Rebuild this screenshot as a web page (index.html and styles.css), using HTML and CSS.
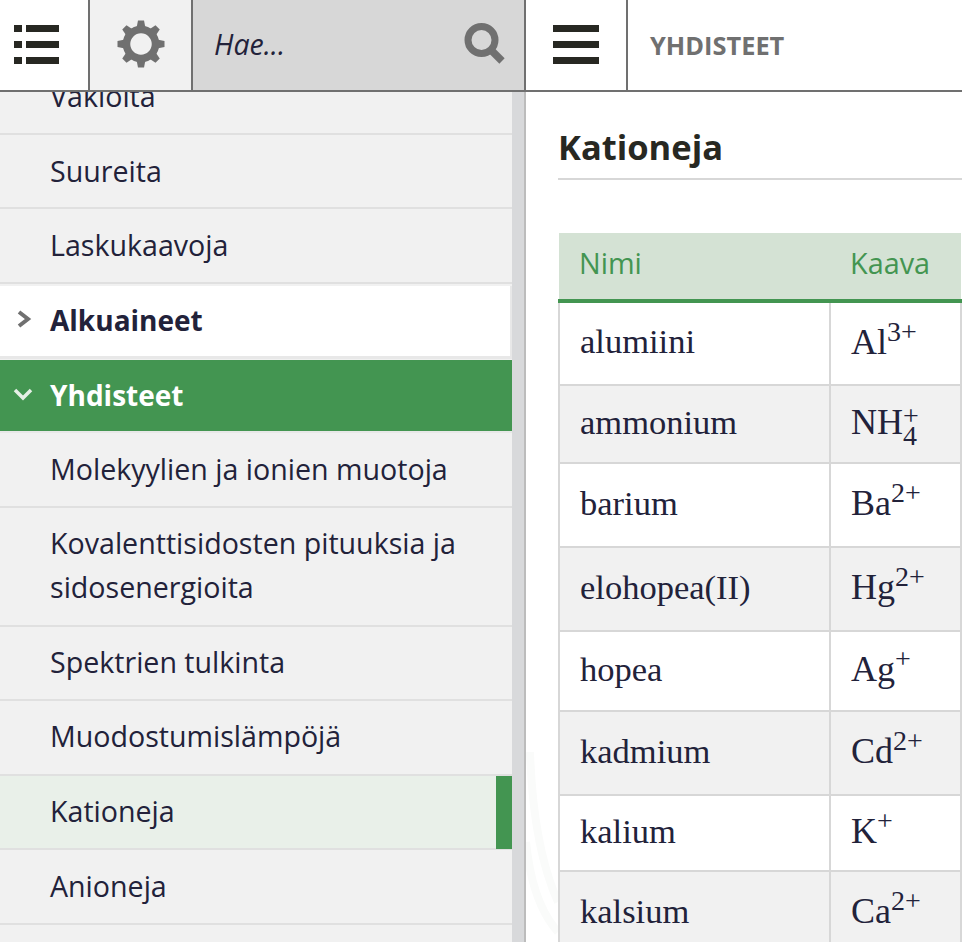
FILE: index.html
```html
<!DOCTYPE html>
<html lang="fi">
<head>
<meta charset="utf-8">
<title>Kationeja</title>
<link rel="stylesheet" href="styles.css">
</head>
<body>
<div class="app">
  <header class="topbar">
    <div class="tool tool-list">
      <svg class="icon-bars" width="46" height="42" viewBox="0 0 46 42"><path d="M0 1h8v7H0zM12 1h33v7H12zM0 17h8v7H0zM12 17h33v7H12zM0 33h8v7H0zM12 33h33v7H12z"/></svg>
    </div>
    <div class="tool tool-gear">
      <svg width="48" height="48" viewBox="0 0 48 48" fill="#707070">
        <g>
          <path d="M19.500 8l1.500-7.500h6l1.500 7.500z"/>
          <path d="M19.500 8l1.500-7.500h6l1.500 7.500z" transform="rotate(45 24 24)"/>
          <path d="M19.500 8l1.500-7.500h6l1.500 7.500z" transform="rotate(90 24 24)"/>
          <path d="M19.500 8l1.500-7.500h6l1.500 7.500z" transform="rotate(135 24 24)"/>
          <path d="M19.500 8l1.500-7.500h6l1.500 7.500z" transform="rotate(180 24 24)"/>
          <path d="M19.500 8l1.500-7.500h6l1.500 7.500z" transform="rotate(225 24 24)"/>
          <path d="M19.500 8l1.500-7.500h6l1.500 7.500z" transform="rotate(270 24 24)"/>
          <path d="M19.500 8l1.500-7.500h6l1.500 7.500z" transform="rotate(315 24 24)"/>
        </g>
        <circle cx="24" cy="24" r="14.500" fill="none" stroke="#707070" stroke-width="7.500"/>
      </svg>
    </div>
    <div class="tool tool-search">
      <span class="search-text">Hae...</span>
      <svg width="42" height="44" viewBox="0 0 42 44" fill="none" stroke="#707070"><circle cx="17.500" cy="18" r="13.500" stroke-width="7"/><path d="M27 28l11 11" stroke-width="7.500"/></svg>
    </div>
    <div class="tool tool-menu">
      <svg class="icon-bars" width="46" height="42" viewBox="0 0 46 42"><path d="M0 1h46v7H0zM0 17h46v7H0zM0 33h46v7H0z"/></svg>
    </div>
    <div class="page-title">YHDISTEET</div>
  </header>
  <div class="content">
    <nav class="sidebar">
      <div class="nav-scroll">
        <ul class="nav-list">
          <li class="nav-item">Vakioita</li>
          <li class="nav-item">Suureita</li>
          <li class="nav-item">Laskukaavoja</li>
          <li class="nav-item nav-section nav-closed">
            <svg class="chev" width="16" height="18" viewBox="0 0 16 18" fill="none" stroke="#707070" stroke-width="4"><path d="M3 2l9 7-9 7"/></svg>
            Alkuaineet
          </li>
          <li class="nav-item nav-section nav-open">
            <svg class="chev" width="20" height="16" viewBox="0 0 20 16" fill="none" stroke="#e6efe6" stroke-width="3.500"><path d="M2 3l8 8 8-8"/></svg>
            Yhdisteet
          </li>
          <li class="nav-item">Molekyylien ja ionien muotoja</li>
          <li class="nav-item">Kovalenttisidosten pituuksia ja<br>sidosenergioita</li>
          <li class="nav-item">Spektrien tulkinta</li>
          <li class="nav-item">Muodostumislämpöjä</li>
          <li class="nav-item nav-current">Kationeja</li>
          <li class="nav-item">Anioneja</li>
          <li class="nav-item">Happoja</li>
        </ul>
      </div>
      <div class="scrollbar"></div>
    </nav>
    <main class="main">
      <svg class="watermark" width="32" height="190" viewBox="0 0 32 190" fill="none" stroke="#fafbfa" stroke-width="8"><path d="M4 0c2 60 10 110 28 150M0 90c4 40 14 70 32 90"/></svg>
      <h1 class="heading">Kationeja</h1>
      <table class="ions">
        <thead>
          <tr><th class="col-name">Nimi</th><th class="col-formula">Kaava</th></tr>
        </thead>
        <tbody>
          <tr class="h84"><td>alumiini</td><td class="formula">Al<sup>3+</sup></td></tr>
          <tr class="h78"><td>ammonium</td><td class="formula">NH<span class="stack"><span>+</span><span>4</span></span></td></tr>
          <tr class="h84"><td>barium</td><td class="formula">Ba<sup>2+</sup></td></tr>
          <tr class="h84"><td>elohopea(II)</td><td class="formula">Hg<sup>2+</sup></td></tr>
          <tr class="h80"><td>hopea</td><td class="formula">Ag<sup>+</sup></td></tr>
          <tr class="h84"><td>kadmium</td><td class="formula">Cd<sup>2+</sup></td></tr>
          <tr class="h76"><td>kalium</td><td class="formula">K<sup>+</sup></td></tr>
          <tr class="h84"><td>kalsium</td><td class="formula">Ca<sup>2+</sup></td></tr>
        </tbody>
      </table>
    </main>
  </div>
</div>
</body>
</html>
```
FILE: styles.css
```css
* { box-sizing: border-box; }
html, body { margin: 0; height: 100%; overflow: hidden; background: #fff; }
body { font-family: "Open Sans", "Noto Sans", sans-serif; color: #22223a; }
.app { display: flex; flex-direction: column; height: 942px; overflow: hidden; }

.topbar { display: flex; height: 92px; flex: none; border-bottom: 2px solid #707070; background: #fff; }
.tool { display: flex; align-items: center; justify-content: center; height: 90px; border-right: 2px solid #707070; flex: none; }
.icon-bars { fill: #272822; display: block; }
.tool-list { width: 90px; background: #fff; padding-right: 15px; }
.tool-gear { width: 103px; background: #f1f1f1; padding: 0 0 3px 1px; }
.tool-search { width: 333px; background: #d7d7d7; justify-content: space-between; padding: 0 18px 2px 21px; }
.tool-menu { width: 102px; background: #fff; }
.search-text { font-style: italic; font-size: 28.500px; color: #22223a; }
.page-title { padding: 0 0 0 22px; display: flex; align-items: center; height: 90px; font-size: 25.400px; font-weight: 700; color: #707070; }

.content { flex: 1; display: flex; min-height: 0; }
.sidebar { width: 526px; flex: none; display: flex; border-right: 2px solid #bcbcbc; overflow: hidden; }
.nav-scroll { width: 512px; flex: none; overflow: hidden; background: #f1f1f1; }
.scrollbar { width: 12px; background: #d8d9db; }
.nav-list { list-style: none; margin: -32px 0 0; padding: 0; }
.nav-item { position: relative; padding: 14.300px 10px 14.300px 50px; line-height: 44px; font-size: 28.600px; border-bottom: 2px solid #e0e0e0; }
.nav-section { font-weight: 700; font-size: 28px; }
.nav-closed { background: #fff; margin-top: 2px; border-right: 2px solid #e8e8e8; border-bottom: 3px solid #e8e8e8; padding-top: 12.300px; padding-bottom: 14.300px; }
.nav-open { background: #439551; color: #fff; margin-top: 1px; padding-top: 13px; padding-bottom: 14px; border-bottom-color: #e8e8e8; }
.nav-open ~ .nav-item { padding-top: 13.300px; padding-bottom: 15.300px; }
.nav-current { background: #e9f0e9; }
.nav-current::after { content: ""; position: absolute; top: 0; right: 0; bottom: -1px; width: 16px; background: #439551; }
.chev { position: absolute; left: 16px; top: 24px; }
.nav-open .chev { left: 13px; top: 27px; }

.main { position: relative; flex: 1; min-width: 0; padding: 32px 0 0 32px; overflow: hidden; }
.watermark { position: absolute; left: 0; bottom: 0; }
.heading { position: relative; margin: 0 0 53px; height: 56px; line-height: 46px; font-size: 34.500px; font-weight: 700; color: #272822; border-bottom: 2px solid #d7d7d7; }
.ions { position: relative; width: 404px; border-collapse: collapse; table-layout: fixed; font-family: "Liberation Serif", serif; font-size: 34.500px; color: #22223a; background: #fff; }
.ions thead tr { height: 68px; }
.ions th { background: #d4e2d4; color: #439551; font-family: "Open Sans", "Noto Sans", sans-serif; font-size: 28.800px; font-weight: 400; text-align: left; border-bottom: 4px solid #439551; padding: 0 0 8px 20px; }
.ions .col-name { width: 271px; }
.ions td { padding: 0 0 4px 20px; border: 2px solid #d7d7d7; border-top: 0; }
.ions tbody tr:nth-child(even) { background: #f1f1f1; }
.h84 { height: 84px; }
.h80 { height: 80px; }
.h78 { height: 78px; }
.h76 { height: 76px; }
.formula { font-size: 36px; }
.formula sup { font-size: 28px; line-height: 0; vertical-align: 13px; }
.stack { display: inline-flex; flex-direction: column; vertical-align: 9px; font-size: 28px; line-height: 20px; height: 0; }
```
